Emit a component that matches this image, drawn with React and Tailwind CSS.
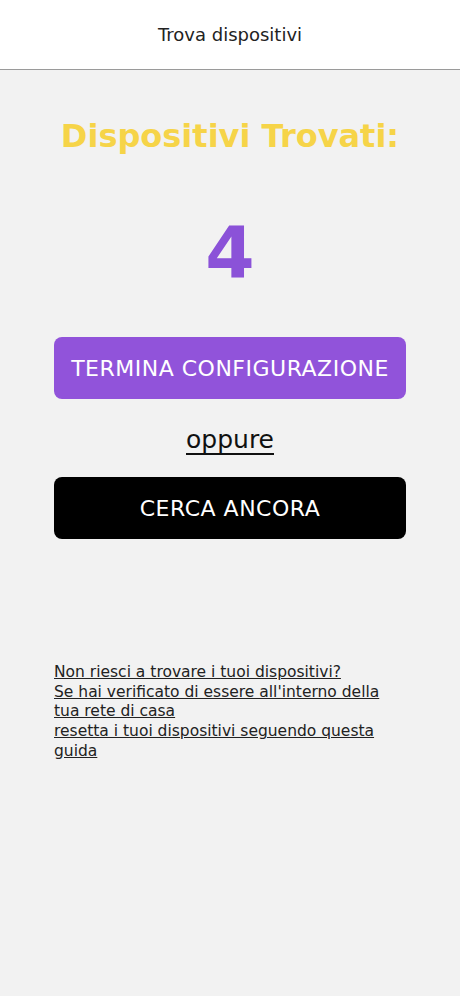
export default function App() {
  return (
    <div className="min-h-[996px] bg-[#f2f2f2] flex flex-col" style={{ fontFamily: '"DejaVu Sans", sans-serif' }}>
      <div className="h-[70px] bg-white border-b border-[#9a9a9a] flex items-center justify-center">
        <span className="text-[18px] text-[#222]">Trova dispositivi</span>
      </div>
      <div className="px-[54px] flex flex-col items-stretch">
        <h1 className="mt-[46px] text-center text-[32px] font-bold text-[#f6d448] leading-[40px]">Dispositivi Trovati:</h1>
        <div className="mt-[52px] text-center text-[71px] font-bold text-[#8b52d8] leading-[90px]">4</div>
        <button className="mt-[39px] h-[62px] rounded-[8px] bg-[#9153da] text-white text-[22px] tracking-[0.5px]">TERMINA CONFIGURAZIONE</button>
        <div className="mt-[22px] text-center leading-[37px]">
          <span className="text-[25px] text-[#111] underline underline-offset-[5px] decoration-[1.5px]">oppure</span>
        </div>
        <button className="mt-[16px] h-[62px] rounded-[8px] bg-black text-white text-[22px] tracking-[0.5px]">CERCA ANCORA</button>
        <p className="mt-[124px] text-[15.5px] leading-[19.7px] text-[#222] underline">
          Non riesci a trovare i tuoi dispositivi?<br />
          Se hai verificato di essere all'interno della<br />
          tua rete di casa<br />
          resetta i tuoi dispositivi seguendo questa<br />
          guida
        </p>
      </div>
    </div>
  );
}
